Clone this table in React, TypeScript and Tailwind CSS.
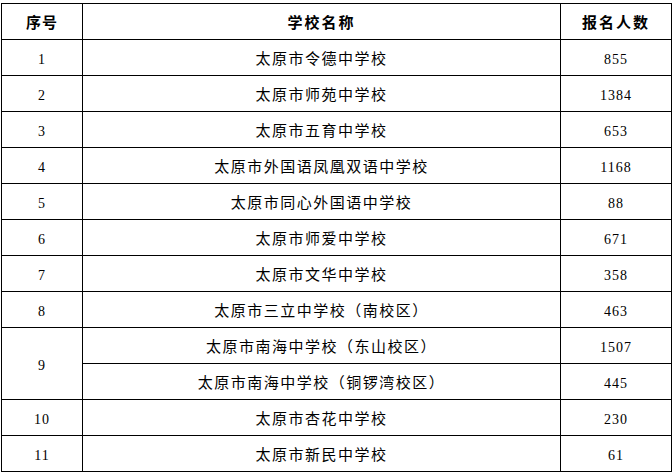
const rows: { no: string; names: { name: string; count: string }[] }[] = [
  { no: '1', names: [{ name: '太原市令德中学校', count: '855' }] },
  { no: '2', names: [{ name: '太原市师苑中学校', count: '1384' }] },
  { no: '3', names: [{ name: '太原市五育中学校', count: '653' }] },
  { no: '4', names: [{ name: '太原市外国语凤凰双语中学校', count: '1168' }] },
  { no: '5', names: [{ name: '太原市同心外国语中学校', count: '88' }] },
  { no: '6', names: [{ name: '太原市师爱中学校', count: '671' }] },
  { no: '7', names: [{ name: '太原市文华中学校', count: '358' }] },
  { no: '8', names: [{ name: '太原市三立中学校（南校区）', count: '463' }] },
  {
    no: '9',
    names: [
      { name: '太原市南海中学校（东山校区）', count: '1507' },
      { name: '太原市南海中学校（铜锣湾校区）', count: '445' },
    ],
  },
  { no: '10', names: [{ name: '太原市杏花中学校', count: '230' }] },
  { no: '11', names: [{ name: '太原市新民中学校', count: '61' }] },
]

const cjk = "font-['Noto_Sans_CJK_SC',sans-serif]"
const num = "font-['Liberation_Serif',serif] text-[14px] tracking-[1px]"

export default function App() {
  return (
    <div className="min-h-screen bg-white pl-[1px] pt-[3px] text-black">
      <table className="w-[670px] table-fixed border-collapse">
        <colgroup>
          <col className="w-[81px]" />
          <col className="w-[478px]" />
          <col className="w-[111px]" />
        </colgroup>
        <thead>
          <tr className="h-[36px]">
            <th className={`border border-black p-0 pt-[1px] text-center text-[15px] font-bold tracking-[1px] ${cjk}`}>序号</th>
            <th className={`border border-black p-0 pt-[1px] text-center text-[15px] font-bold tracking-[2px] ${cjk}`}>学校名称</th>
            <th className={`border border-black p-0 pt-[1px] text-center text-[15px] font-bold tracking-[2px] ${cjk}`}>报名人数</th>
          </tr>
        </thead>
        <tbody>
          {rows.map((r) =>
            r.names.map((n, i) => (
              <tr key={r.no + '-' + i} className="h-[36px]">
                {i === 0 && (
                  <td rowSpan={r.names.length} className={`border border-black p-0 pt-[3px] text-center ${num}`}>
                    {r.no}
                  </td>
                )}
                <td className={`border border-black p-0 pt-[2px] text-center text-[15px] tracking-[1.5px] ${cjk}`}>
                  {n.name}
                </td>
                <td className={`border border-black p-0 pt-[3px] text-center ${num}`}>{n.count}</td>
              </tr>
            ))
          )}
        </tbody>
      </table>
    </div>
  )
}
